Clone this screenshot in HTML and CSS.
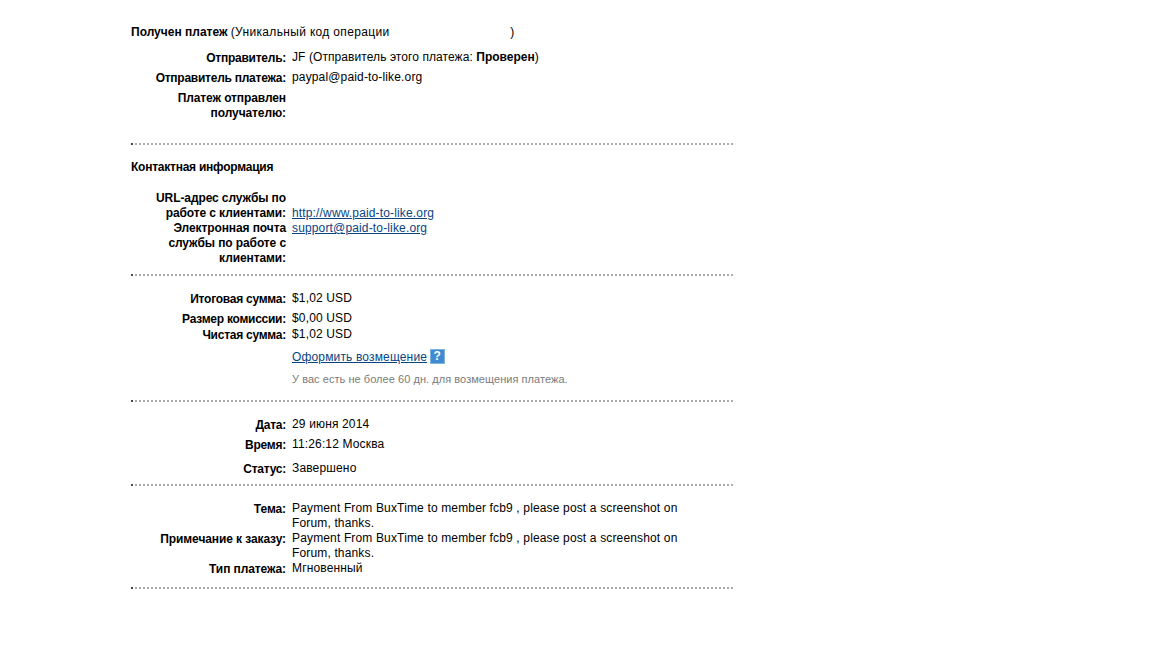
FILE: index.html
```html
<!DOCTYPE html>
<html lang="ru">
  <head>
    <meta charset="UTF-8" />
    <meta name="viewport" content="width=device-width, initial-scale=1.0" />
    <link rel="stylesheet" href="styles.css">
    <title>Сведения о платеже</title>
  </head>
  <body>
    <main class="details">
      <section class="block block-payment">
        <h2 class="title">Получен платеж <span class="title-note">(Уникальный код операции <span class="code-gap"></span>)</span></h2>
        <div class="row row-sender">
          <div class="label">Отправитель:</div>
          <div class="value">JF (Отправитель этого платежа: <b>Проверен</b>)</div>
        </div>
        <div class="row row-email">
          <div class="label">Отправитель платежа:</div>
          <div class="value">paypal@paid-to-like.org</div>
        </div>
        <div class="row row-to">
          <div class="label">Платеж отправлен получателю:</div>
          <div class="value"></div>
        </div>
      </section>

      <section class="block block-contact">
        <h2 class="title">Контактная информация</h2>
        <div class="row row-url">
          <div class="label">URL-адрес службы по работе с клиентами:</div>
          <div class="value"><a href="#">http://www.paid-to-like.org</a></div>
        </div>
        <div class="row">
          <div class="label">Электронная почта службы по работе с клиентами:</div>
          <div class="value"><a href="#">support@paid-to-like.org</a></div>
        </div>
      </section>

      <section class="block block-sum">
        <div class="row">
          <div class="label">Итоговая сумма:</div>
          <div class="value">$1,02 USD</div>
        </div>
        <div class="row row-fee">
          <div class="label">Размер комиссии:</div>
          <div class="value">$0,00 USD</div>
        </div>
        <div class="row row-net">
          <div class="label">Чистая сумма:</div>
          <div class="value">$1,02 USD</div>
        </div>
        <div class="row row-refund">
          <div class="label"></div>
          <div class="value"><a href="#">Оформить возмещение</a> <span class="help">?</span></div>
        </div>
        <div class="row row-hint">
          <div class="label"></div>
          <div class="value hint">У вас есть не более 60 дн. для возмещения платежа.</div>
        </div>
      </section>

      <section class="block block-date">
        <div class="row">
          <div class="label">Дата:</div>
          <div class="value">29 июня 2014</div>
        </div>
        <div class="row row-time">
          <div class="label">Время:</div>
          <div class="value">11:26:12 Москва</div>
        </div>
        <div class="row row-status">
          <div class="label">Статус:</div>
          <div class="value">Завершено</div>
        </div>
      </section>

      <section class="block block-subject">
        <div class="row">
          <div class="label">Тема:</div>
          <div class="value">Payment From BuxTime to member fcb9 , please post a screenshot on Forum, thanks.</div>
        </div>
        <div class="row">
          <div class="label">Примечание к заказу:</div>
          <div class="value">Payment From BuxTime to member fcb9 , please post a screenshot on Forum, thanks.</div>
        </div>
        <div class="row">
          <div class="label">Тип платежа:</div>
          <div class="value">Мгновенный</div>
        </div>
      </section>
    </main>
  </body>
</html>
```

FILE: styles.css
```css
* {
  padding: 0;
  margin: 0;
  box-sizing: border-box;
}

body {
  background-color: #fff;
  color: #000;
  font-family: "Liberation Sans", Arial, sans-serif;
  font-size: 12px;
  line-height: 15px;
}

.details {
  width: 602px;
  margin-left: 131px;
  padding-top: 25px;
}

/* dotted rule: 2px squares every 4px, first one darker */
.block {
  background-image: linear-gradient(#444, #444), linear-gradient(90deg, #aaa 50%, transparent 50%);
  background-size: 2px 2px, 4px 2px;
  background-position: left bottom, left bottom;
  background-repeat: no-repeat, repeat-x;
}

.block-payment {
  height: 120px;
}
.block-contact {
  height: 131px;
  padding-top: 15px;
}
.block-sum {
  height: 126px;
  padding-top: 15px;
}
.block-date {
  height: 84px;
  padding-top: 15px;
}
.block-subject {
  height: 103px;
  padding-top: 15px;
}

.title {
  font-size: 12px;
  font-weight: bold;
}

.block-contact .title {
  margin-bottom: 16px;
  letter-spacing: -0.24px;
}

.title-note {
  font-weight: normal;
  letter-spacing: 0.33px;
}

.code-gap {
  display: inline-block;
  width: 117px;
}

.row {
  display: flex;
  gap: 6px;
}

.label {
  width: 155px;
  flex-shrink: 0;
  padding-top: 1px;
  margin-bottom: -1px;
  text-align: right;
  font-weight: bold;
  letter-spacing: -0.25px;
}

.block-contact .label {
  padding-top: 0;
  margin-bottom: 0;
  letter-spacing: -0.1px;
}

.row-to .label,
.block-subject .label {
  letter-spacing: -0.1px;
}

.value {
  width: 395px;
  letter-spacing: 0.15px;
}

.row-sender .value {
  letter-spacing: 0.08px;
}

.value b {
  letter-spacing: 0;
}

.row-sender {
  margin-top: 10px;
}
.row-email,
.row-to {
  margin-top: 5px;
}
.row-url {
  align-items: flex-end;
}
.row-fee {
  margin-top: 5px;
}
.row-net {
  margin-top: 1px;
}
.row-refund {
  margin-top: 8px;
}
.row-hint {
  margin-top: 7px;
}
.row-time {
  margin-top: 5px;
}
.row-status {
  margin-top: 9px;
}

a {
  color: #084482;
}

.help {
  display: inline-block;
  width: 15px;
  height: 15px;
  margin-top: -1px;
  margin-left: -1px;
  background-color: #3f8ad0;
  border: 1px solid #7fb4e2;
  color: #fff;
  font-size: 12px;
  font-weight: bold;
  line-height: 13px;
  text-align: center;
  vertical-align: top;
  letter-spacing: 0;
}

.hint {
  color: #7b7b7b;
  font-size: 11px;
  letter-spacing: 0.05px;
  white-space: nowrap;
}
```
